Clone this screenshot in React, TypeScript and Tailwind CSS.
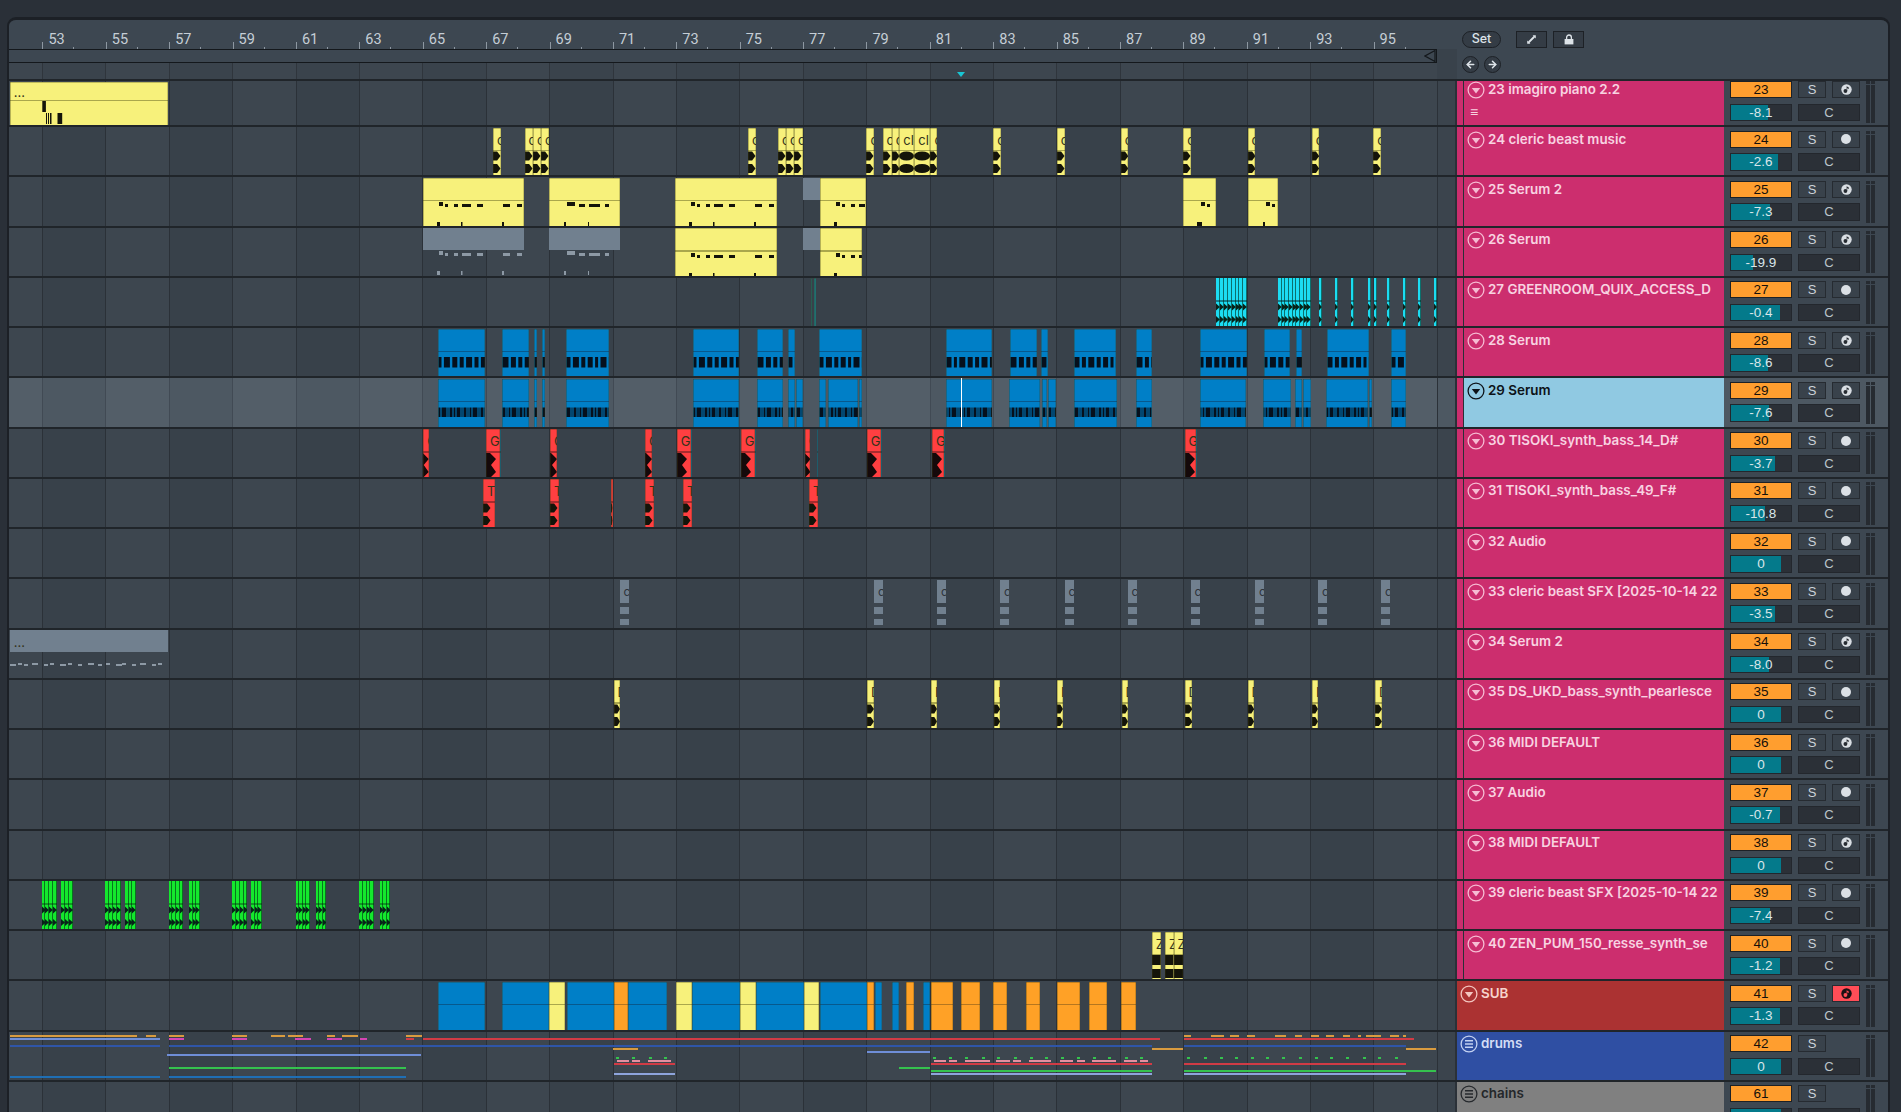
import { ArrowLeft, ArrowRight } from "lucide-react";

type ColorKey = "yellow" | "blue" | "red" | "cyan" | "grey" | "green" | "orange" | "teal";
type Kind = "wave" | "wide" | "red" | "tiny" | "bars" | "dense" | "ghost" | "zed" | "none";
type Note = [number, number, number, number?];

type Clip = {
  a: number;
  b: number;
  c: ColorKey;
  t?: string;
  kind?: Kind;
  notes?: Note[];
  muted?: boolean;
  head?: number;
};

const HEAD: Record<ColorKey, string> = {
  yellow: "bg-[#f7f17b]",
  blue: "bg-[#007fc7]",
  red: "bg-[#ff3f41]",
  cyan: "bg-[#1cdcf2]",
  grey: "bg-[#71808f]",
  green: "bg-[#14e82d]",
  orange: "bg-[#ffa126]",
  teal: "bg-[#17808f]",
};

const LINE: Record<ColorKey, string> = {
  yellow: "bg-[#aaa74c]",
  blue: "bg-[#07598d]",
  red: "bg-[#a82b2e]",
  cyan: "bg-[#11808f]",
  grey: "bg-[#5a6672]",
  green: "bg-[#0f9a22]",
  orange: "bg-[#b5761f]",
  teal: "bg-[#17808f]",
};

// long midi clip, notes relative to clip start
const PHRASE: Note[] = [
  [16, 4, 1, 4], [22, 3, 3], [31, 4, 3], [39, 9, 3], [54, 6, 3], [80, 7, 3], [94, 5, 3],
  [14, 3, 21, 4], [38, 1.5, 21, 4], [79, 2, 21, 4],
];
const PHRASE_B: Note[] = [
  [18, 8, 1, 4], [30, 6, 3], [40, 11, 3], [56, 4, 3], [15, 2, 21, 4], [39, 1, 21, 4],
];
const PHRASE_C: Note[] = [[16, 4, 1, 4], [22, 3, 3], [31, 4, 3], [39, 6, 3], [14, 3, 21, 4]];

const LONG_NOTES: Note[] = [
  0, 8, 14, 22, 34, 40, 50, 58, 68, 78, 88, 96, 106, 112, 122, 130, 142, 148,
].map((x, i) => [x, i % 3 === 0 ? 6 : 4, i % 2 ? 11 : 12, 2] as Note);

function split(a: number, b: number, n: number, c: ColorKey, kind: Kind, t?: string): Clip[] {
  const w = (b - a) / n;
  return Array.from({ length: n }, (_, i) => ({ a: a + i * w, b: a + (i + 1) * w, c, kind, t }));
}

const y24 = (a: number, b: number, t = "c", kind: Kind = "wave"): Clip => ({ a, b, c: "yellow", t, kind });
const blue = (a: number, b: number, kind: Kind): Clip => ({ a, b, c: "blue", kind });
const redClip = (a: number, b: number): Clip => ({ a, b, c: "red", t: "G", kind: "red" });
const tClip = (a: number, b: number): Clip => ({ a, b, c: "red", t: "T", kind: "wave" });
const violet = (x: number): Clip => ({ a: x, b: x + 1.4, c: "blue", kind: "none" });
const ghost = (a: number): Clip => ({ a, b: a + 9, c: "grey", t: "c", kind: "ghost", muted: true });
const yd = (a: number, b: number): Clip => ({ a, b, c: "yellow", t: "D", kind: "wave" });
const ySub = (a: number, b: number, c: ColorKey): Clip => ({ a, b, c, kind: "none" });

const GREENS: [number, number, number][] = [
  [41.6, 57, 4], [61.2, 73.5, 3], [104.5, 120.8, 4], [125, 136, 3], [168.6, 183.3, 4], [189, 199.6, 3],
  [232.2, 247.3, 4], [251.4, 262, 3], [295.5, 309.8, 4], [315.5, 326, 3], [359.2, 374, 4], [379.6, 390.2, 3],
];

const ROW28: [number, number][] = [
  [438.3, 485], [502, 528.7], [534, 537], [542, 544.7], [566, 609], [692.7, 739.3], [756.7, 783.3], [787.7, 795.3],
  [819, 862.3], [945.7, 992], [1010, 1037], [1041, 1047.5], [1073.6, 1116], [1136, 1151.8], [1200, 1247],
  [1264, 1290], [1295.7, 1302], [1326.8, 1369], [1391, 1406.4],
];

const ROW29: [number, number][] = [
  [438.3, 485], [502, 528.7], [534, 537], [542, 544.7], [566, 609], [692.7, 739.3], [756.7, 783.3], [787.7, 795.3],
  [796, 803], [819, 825.5], [827.5, 858], [858.5, 862.3], [945.7, 992], [1009, 1040], [1041.5, 1046.5], [1047.5, 1056],
  [1074, 1116.6], [1136, 1152], [1200, 1246], [1263, 1291], [1295, 1302], [1303, 1311], [1326, 1368], [1369, 1372],
  [1391, 1406],
];

const SUB: [number, number, ColorKey][] = [
  [438.4, 485.3, "blue"], [502, 549.4, "blue"], [549.4, 565.3, "yellow"], [566.5, 613.5, "blue"], [613.6, 628.2, "orange"],
  [628.2, 667, "blue"], [676.4, 692, "yellow"], [692, 740.2, "blue"], [740.2, 755.9, "yellow"], [755.9, 804, "blue"],
  [804, 818.6, "yellow"], [819.7, 866.7, "blue"], [866.7, 874, "orange"], [875, 882.4, "blue"], [891.8, 899.2, "blue"],
  [906, 913.8, "orange"], [922.7, 930.5, "blue"], [930.5, 953, "orange"], [961.4, 980.2, "orange"], [992.8, 1007.4, "orange"],
  [1025.7, 1039.9, "orange"], [1056.6, 1079.6, "orange"], [1088.5, 1106.8, "orange"], [1121, 1135.6, "orange"],
];

const CLIPS: Record<number, Clip[]> = {
  23: [
    {
      a: 9.7, b: 168, c: "yellow", t: "...", head: 18,
      notes: [[32.3, 3.6, 0, 11], [36, 1, 12, 11], [38, 1, 12, 11], [40, 1.5, 12, 11], [47.5, 4.7, 12, 11]],
    },
  ],
  24: [
    y24(493, 501), y24(524.5, 533), y24(533, 541), y24(541, 549), y24(748, 755.5), y24(778, 786), y24(786, 794), y24(794, 803),
    y24(866.4, 874), y24(882.5, 891.8), y24(891.8, 899.3), y24(899.3, 914.3, "cl", "wide"), y24(914.3, 930.4, "cl", "wide"),
    y24(930.4, 937.5), y24(993.2, 1000.7), y24(1056.8, 1064.6), y24(1120.7, 1128), y24(1183.2, 1191), y24(1247.5, 1255),
    y24(1311.8, 1319), y24(1373.2, 1381.4),
  ],
  25: [
    { a: 423.3, b: 524.5, c: "yellow", notes: PHRASE }, { a: 549.4, b: 620, c: "yellow", notes: PHRASE_B },
    { a: 675, b: 777, c: "yellow", notes: PHRASE }, { a: 802.6, b: 819.6, c: "grey", muted: true, kind: "none" },
    { a: 819.6, b: 866, c: "yellow", notes: PHRASE_C }, { a: 1183, b: 1215.7, c: "yellow", notes: [[18, 4, 1, 4], [24, 3, 3], [14, 5, 21, 4]] },
    { a: 1247.5, b: 1278, c: "yellow", notes: [[18, 4, 1, 4], [24, 3, 3], [15, 2, 21, 4]] },
  ],
  26: [
    { a: 423.3, b: 524.5, c: "grey", muted: true, notes: PHRASE }, { a: 549.4, b: 620, c: "grey", muted: true, notes: PHRASE_B },
    { a: 675, b: 777, c: "yellow", notes: PHRASE }, { a: 802.6, b: 819.6, c: "grey", muted: true, kind: "none" },
    { a: 819.6, b: 862, c: "yellow", notes: PHRASE_C },
  ],
  27: [
    { a: 810.7, b: 812.3, c: "teal", kind: "none" }, { a: 814.3, b: 815.7, c: "teal", kind: "none" },
    ...split(1216.4, 1247, 8, "cyan", "tiny"), ...split(1278, 1311, 9, "cyan", "tiny"),
    ...[1319.3, 1335, 1351, 1368, 1374, 1386.8, 1403, 1418, 1434].map((x) => ({ a: x, b: x + 2.8, c: "cyan" as ColorKey, kind: "tiny" as Kind })),
  ],
  28: ROW28.map(([a, b]) => blue(a, b, "bars")),
  29: ROW29.map(([a, b]) => blue(a, b, "dense")),
  30: [
    redClip(423.3, 429), redClip(486, 500), violet(500), redClip(550, 557), redClip(645, 652), redClip(676.7, 691), violet(691),
    redClip(740.7, 755), violet(755), redClip(804.7, 810.3), violet(816.7), redClip(866.7, 880.7), violet(880.7), redClip(932, 944),
    violet(944), redClip(1184.5, 1195.5), violet(1195.5),
  ],
  31: [tClip(483, 494.7), tClip(550, 558.7), tClip(611.3, 612.7), tClip(645, 653.7), tClip(683, 692), tClip(809, 818)],
  33: [619.5, 874, 937, 1000, 1064.5, 1127.5, 1190.6, 1255, 1318, 1381].map(ghost),
  34: [{ a: 9.7, b: 168, c: "grey", t: "...", muted: true, notes: LONG_NOTES }],
  35: [
    yd(613.5, 619.5), yd(867, 874), yd(931, 937), yd(994, 1000.2), yd(1057, 1063), yd(1121.5, 1127.5), yd(1184.5, 1192),
    yd(1247.5, 1253.6), yd(1312, 1318), yd(1375, 1382),
  ],
  39: GREENS.flatMap(([a, b, n]) => split(a, b, n, "green", "tiny")),
  40: [
    { a: 1151.8, b: 1160.6, c: "yellow", t: "Z", kind: "zed" }, { a: 1165, b: 1173.5, c: "yellow", t: "Z", kind: "zed" },
    { a: 1173.5, b: 1183, c: "yellow", t: "Z", kind: "zed" },
  ],
  41: SUB.map(([a, b, c]) => ySub(a, b, c)),
};

// automation-ish thin lines of the drums row: start, end, y, colour
const z = (v: number) => v / 1.912 + 600;
const OR = "#d99b3f";
const PERI = "#6f8ed8";
const PINK = "#d445b4";
const RED = "#d13b45";
const DBLUE = "#2f55a8";
const GRN = "#35c24e";
const LINES: [number, number, number, string][] = [
  [9.8, 137, 1035, OR], [146, 156, 1035, OR], [168.6, 184, 1035, OR], [232, 247, 1035, OR], [271, 285, 1035, OR],
  [288, 303, 1035, OR], [327, 335, 1035, OR], [342, 358, 1035, OR], [406, 422, 1035, OR],
  ...[[1116, 1130], [1168, 1193], [1205, 1222], [1237, 1252], [1290, 1312], [1328, 1343], [1360, 1375], [1388, 1404], [1420, 1434], [1450, 1455], [1465, 1493], [1510, 1527], [1535, 1541]].map(
    ([a, b]) => [z(a), z(b), 1035, OR] as [number, number, number, string],
  ),
  [9.8, 160, 1038.5, PERI], [168.6, 184, 1038.5, PINK], [232, 247, 1038.5, PINK], [295, 311, 1038.5, PINK], [327, 342, 1038.5, PINK],
  [360, 367, 1038.5, PINK], [406, 414, 1038.5, RED], [423, 1159.6, 1038.5, RED], [1183.7, 1413.8, 1038.5, RED],
  [9.8, 160, 1045, DBLUE], [168.6, 1151.8, 1045, DBLUE], [1183.7, 1406, 1045, DBLUE],
  [613, 637.7, 1048.3, OR], [1151.8, 1183, 1048.3, OR], [1406, 1436, 1048.3, OR],
  [167, 421, 1054.7, PERI], [866.7, 930, 1051.3, PERI],
  ...[34, 64, 96, 125, 640, 670, 701, 733, 762, 795, 825, 853, 884, 915, 945, 975, 1007, 1036, 1126, 1157, 1188, 1217, 1248, 1277, 1307, 1339, 1370, 1399, 1430, 1461, 1490, 1522].map(
    (v) => [z(v) - 1.5, z(v) + 1.5, 1057.5, GRN] as [number, number, number, string],
  ),
  ...[[33, 55], [61, 76], [92, 136], [638, 662], [667, 683], [697, 746], [758, 783], [789, 804], [820, 863], [880, 905], [912, 927], [941, 987], [1002, 1027], [1032, 1047]].map(
    ([a, b]) => [z(a), z(b), 1060.5, "#e48fa0"] as [number, number, number, string],
  ),
  [613.6, 675.3, 1063.7, RED], [930.5, 1151.8, 1063.7, RED], [1183.7, 1406, 1063.7, RED],
  [168.6, 406, 1067, GRN], [898.6, 930, 1067, GRN], [930.5, 1151.8, 1070, GRN], [1183.7, 1436, 1070, GRN],
  [613.6, 675.3, 1073.5, "#8ea4dc"], [930.5, 1151.8, 1073.5, "#8ea4dc"], [1183.7, 1406, 1073.5, "#8ea4dc"],
  [9.8, 160, 1076, "#1f6fb5"], [168.6, 406, 1076, "#1f6fb5"],
];

type Track = { n: string; num: number; vol: string; fill: number; midi?: boolean; tone?: "sub" | "drums" | "chains" };

const TRACKS: Track[] = [
  { n: "23 imagiro piano 2.2", num: 23, vol: "-8.1", fill: 62, midi: true },
  { n: "24 cleric beast music", num: 24, vol: "-2.6", fill: 79 },
  { n: "25 Serum 2", num: 25, vol: "-7.3", fill: 65, midi: true },
  { n: "26 Serum", num: 26, vol: "-19.9", fill: 37, midi: true },
  { n: "27 GREENROOM_QUIX_ACCESS_D", num: 27, vol: "-0.4", fill: 82 },
  { n: "28 Serum", num: 28, vol: "-8.6", fill: 61, midi: true },
  { n: "29 Serum", num: 29, vol: "-7.6", fill: 64, midi: true },
  { n: "30 TISOKI_synth_bass_14_D#", num: 30, vol: "-3.7", fill: 74 },
  { n: "31 TISOKI_synth_bass_49_F#", num: 31, vol: "-10.8", fill: 57 },
  { n: "32 Audio", num: 32, vol: "0", fill: 83 },
  { n: "33 cleric beast SFX [2025-10-14 22", num: 33, vol: "-3.5", fill: 74 },
  { n: "34 Serum 2", num: 34, vol: "-8.0", fill: 63, midi: true },
  { n: "35 DS_UKD_bass_synth_pearlesce", num: 35, vol: "0", fill: 83 },
  { n: "36 MIDI DEFAULT", num: 36, vol: "0", fill: 83, midi: true },
  { n: "37 Audio", num: 37, vol: "-0.7", fill: 82 },
  { n: "38 MIDI DEFAULT", num: 38, vol: "0", fill: 83, midi: true },
  { n: "39 cleric beast SFX [2025-10-14 22", num: 39, vol: "-7.4", fill: 65 },
  { n: "40 ZEN_PUM_150_resse_synth_se", num: 40, vol: "-1.2", fill: 81 },
  { n: "SUB", num: 41, vol: "-1.3", fill: 81, midi: true, tone: "sub" },
  { n: "drums", num: 42, vol: "0", fill: 83, tone: "drums" },
  { n: "chains", num: 61, vol: "0", fill: 83, tone: "chains" },
];

const BARS = Array.from({ length: 22 }, (_, i) => 53 + i * 2);

function ClipBody({ clip, w }: { clip: Clip; w: number }) {
  const kind = clip.kind;
  const noteFill = clip.muted ? "#8d99a5" : "#14140a";
  const shapes: React.ReactNode[] = [];

  if (kind === "wave") {
    const t = Math.min(w, 7.5);
    [5, 17.5].forEach((y) =>
      shapes.push(<polygon key={y} points={`0,${y - 4.5} ${t * 0.55},${y - 4.5} ${t},${y} ${t * 0.55},${y + 4.5} 0,${y + 4.5}`} fill="#14140a" />),
    );
  }
  if (kind === "wide") {
    [5, 17.5].forEach((y) => shapes.push(<ellipse key={y} cx={w / 2} cy={y} rx={w / 2} ry={4.5} fill="#14140a" />));
  }
  if (kind === "tiny") {
    [5, 17.5].forEach((y) => shapes.push(<polygon key={y} points={`0,${y - 3.5} ${w},${y} 0,${y + 3.5}`} fill="#082219" />));
  }
  if (kind === "red") {
    const e = Math.min(w - 3, 7);
    shapes.push(<polygon key="r" points={`0,0 ${e - 3},0 ${e + 3},6 ${e - 2},12 ${e + 3},19 ${e - 3},25 0,25`} fill="#15090a" />);
  }
  if (kind === "zed") {
    shapes.push(<rect key="a" x={0} y={0} width={w} height={10} fill="#14140a" />);
    shapes.push(<rect key="b" x={0} y={14} width={w} height={9} fill="#14140a" />);
  }
  if (kind === "bars" || kind === "dense") {
    const cycle = kind === "bars" ? [5, 4, 6, 4, 5, 3, 6] : [3, 1, 2, 5, 1, 3, 2, 4, 1];
    const gap = kind === "bars" ? 2.4 : 1;
    let x = 0.5;
    let i = Math.round(w);
    while (x < w) {
      const bw = cycle[i % cycle.length];
      shapes.push(<rect key={x} x={x} y={kind === "bars" ? 5 : 5.5} width={bw} height={kind === "bars" ? 10.5 : 9.5} fill="#05101d" />);
      x += bw + gap;
      i += 1;
    }
  }
  clip.notes?.forEach(([x, nw, y, h]) => shapes.push(<rect key={`${x}-${y}`} x={x} y={y} width={nw} height={h ?? 3} fill={noteFill} />));

  return (
    <svg width={w} height={26} className="block">
      {shapes}
    </svg>
  );
}

function ClipBox({ clip }: { clip: Clip }) {
  const w = clip.b - clip.a;
  const head = clip.head ?? 22;

  if (clip.kind === "ghost") {
    return (
      <div className="absolute top-[1px] bottom-0 flex flex-col overflow-hidden" style={{ left: clip.a - 9, width: w }}>
        <div className={`${HEAD.grey} h-[23px] shrink-0 pl-1 text-[12px] leading-[24px] text-[#2d333a] font-['Inter',sans-serif]`}>{clip.t}</div>
        <div className="bg-[#71808f] h-[7px] mt-[4px] shrink-0" />
        <div className="bg-[#71808f] h-[6px] mt-[5px] shrink-0" />
      </div>
    );
  }

  const edge =
    clip.kind === "tiny"
      ? "shadow-[inset_-1px_0_0_rgba(0,40,20,0.6)]"
      : clip.muted
        ? ""
        : "shadow-[inset_1px_0_0_rgba(60,60,20,0.35),inset_-1px_0_0_rgba(60,60,20,0.25),inset_0_1px_0_rgba(60,60,20,0.3)]";

  return (
    <div className="absolute top-[0.5px] bottom-0 overflow-hidden" style={{ left: clip.a - 9, width: w }}>
      <div className="flex flex-col h-full">
        <div
          className={`${HEAD[clip.c]} shrink-0 pl-[4px] text-[13px] whitespace-nowrap overflow-hidden text-[#33331a] font-['Inter',sans-serif]`}
          style={{ height: head, lineHeight: `${head + 2}px` }}
        >
          {clip.t}
        </div>
        {!clip.muted && <div className={`${LINE[clip.c]} h-[1.5px] shrink-0`} />}
        <div className={`${clip.muted ? "" : HEAD[clip.c]} flex-1 overflow-hidden`}>
          {clip.kind !== "none" && <ClipBody clip={clip} w={w} />}
        </div>
      </div>
      <div className={`absolute inset-0 ${edge}`} />
    </div>
  );
}

function NoteDisc({ armed }: { armed?: boolean }) {
  return (
    <svg width="11" height="11" viewBox="0 0 11 11">
      <circle cx="5.5" cy="5.5" r="5.2" fill={armed ? "#1a1114" : "#d9dee3"} />
      <circle cx="4.4" cy="7" r="1.9" fill={armed ? "#ff4d57" : "#262b31"} />
      <path d="M5.6 7V2.2l2.2 1.4V5L6.2 4.2V7z" fill={armed ? "#ff4d57" : "#262b31"} />
    </svg>
  );
}

function FoldIcon({ track, selected }: { track: Track; selected: boolean }) {
  const isGroupList = track.tone === "drums" || track.tone === "chains";
  const ink = selected ? "#0c1218" : track.tone === "chains" ? "#26292d" : track.tone === "drums" ? "#c4d2f2" : track.tone === "sub" ? "#f3c6c0" : "#f6bcd3";
  return (
    <svg width="18" height="18" viewBox="0 0 18 18" className="shrink-0">
      <circle cx="9" cy="9" r="7.9" fill="none" stroke={ink} strokeWidth="1.3" />
      {isGroupList ? (
        <path d="M5 5.8h8M5 9h8M5 12.2h8" stroke={ink} strokeWidth="1.4" />
      ) : (
        <polygon points="4.8,7 13.2,7 9,12.6" fill={ink} />
      )}
    </svg>
  );
}

function TrackRow({ track, first }: { track: Track; first?: boolean }) {
  const selected = track.num === 29;
  const plain = !track.tone;
  const clips = CLIPS[track.num] ?? [];
  const nameBg = selected
    ? "bg-[#90c9e2] text-[#0c1218]"
    : track.tone === "sub"
      ? "bg-[#ab3232] text-[#f6d3cd]"
      : track.tone === "drums"
        ? "bg-[#2f4fa3] text-[#d3ddf5]"
        : track.tone === "chains"
          ? "bg-[#808080] text-[#24272a]"
          : "bg-[#cc2e6e] text-[#f8d3e1]";

  return (
    <div className={`flex border-b-2 border-[#20252a] shrink-0 ${first ? "h-[46px]" : "h-[50.26px]"}`}>
      <div
        className={`relative w-[1428px] shrink-0 ${
          selected
            ? "bg-[repeating-linear-gradient(90deg,#414a54_33px,#414a54_34px,#4d5862_34px,#4d5862_96.4px,#414a54_96.4px,#414a54_97.4px,#535e68_97.4px,#535e68_159.8px)]"
            : "bg-[repeating-linear-gradient(90deg,#2b3138_33px,#2b3138_34px,#38414a_34px,#38414a_96.4px,#2b3138_96.4px,#2b3138_97.4px,#3d464f_97.4px,#3d464f_159.8px)]"
        }`}
      >
        {clips.map((c, i) => (
          <ClipBox key={i} clip={c} />
        ))}
        {track.num === 42 &&
          LINES.map(([a, b, y, color], i) => (
            <div key={i} className="absolute h-[2px]" style={{ left: a - 9, width: b - a, top: y - 1032, backgroundColor: color }} />
          ))}
        {selected && <div className="absolute top-0 bottom-0 left-[952px] w-px bg-white" />}
      </div>
      <div className={`w-[20px] shrink-0 border-l border-r-2 border-[#2b3138] ${selected ? "bg-[#4d5862]" : "bg-[#3b444d]"}`} />

      <div className={`w-[267px] shrink-0 flex ${nameBg}`}>
        {plain && (
          <div className="w-[7px] shrink-0 flex">
            <div className="w-[6px] bg-[#cc2e6e]" />
            <div className="w-[1px] bg-[#2a2f36]" />
          </div>
        )}
        <div className={`flex-1 min-w-0 relative flex gap-[3px] pl-[3px] ${first ? "pt-0" : "pt-[3.5px]"}`}>
          <FoldIcon track={track} selected={selected} />
          <span className="font-['Inter',sans-serif] text-[13.4px] font-semibold leading-[17px] whitespace-nowrap overflow-hidden pr-1">{track.n}</span>
          {first && <span className="absolute left-[6px] top-[23px] text-[14px] font-semibold leading-[16px] font-['Inter',sans-serif]">≡</span>}
        </div>
      </div>

      <div className={`flex-1 flex pl-[6px] ${selected ? "bg-[#4d5862]" : "bg-[#3d4751]"} ${first ? "pt-0" : "pt-[3.5px]"} font-['Liberation_Sans',sans-serif]`}>
        <div className="w-[130px] shrink-0 flex flex-col gap-[5.5px]">
          <div className="flex gap-[6px] h-[17px]">
            <div className="w-[62px] bg-[#ff9e2f] border border-[#1d2126] text-center text-[13.5px] leading-[15px] text-[#14100a]">{track.num}</div>
            <div className="w-[28px] border border-[#262b31] bg-[#39424b] text-center text-[13px] leading-[15px] text-[#cdd4da]">S</div>
            {!track.tone || track.tone === "sub" ? (
              <div className={`w-[28px] border border-[#262b31] flex items-center justify-center ${track.tone === "sub" ? "bg-[#ff4d57]" : "bg-[#39424b]"}`}>
                {track.midi ? <NoteDisc armed={track.tone === "sub"} /> : <div className="w-[10px] h-[10px] rounded-full bg-[#dbe0e5]" />}
              </div>
            ) : null}
          </div>
          <div className="flex gap-[6px] h-[17.5px]">
            <div className="relative w-[62px] bg-[#2b3037] border border-[#23272d] overflow-hidden">
              <div className="absolute inset-y-0 left-0 bg-[#047a8b]" style={{ width: `${track.fill}%` }} />
              <div className="relative text-center text-[13.5px] leading-[15.5px] text-[#d9e6ea]">{track.vol}</div>
            </div>
            <div className="w-[62px] bg-[#2b3037] border border-[#23272d] text-center text-[13px] leading-[15.5px] text-[#bcc5cb]">C</div>
          </div>
        </div>
        <div className="ml-[5.5px] w-[9.5px] flex justify-between">
          {[0, 1].map((m) => (
            <div key={m} className="w-[4px] flex flex-col gap-[1px] pb-[2.5px]">
              <div className="h-[3px] bg-[#262b31]" />
              <div className="flex-1 bg-[#262b31]" />
            </div>
          ))}
        </div>
      </div>
    </div>
  );
}

function Header() {
  return (
    <div className="flex h-[61px] shrink-0 border-b-2 border-[#20252a] bg-[#3d4751]">
      <div className="w-[1428px] shrink-0 flex flex-col">
        <div className="h-[28.5px] flex items-end pl-[33.4px] font-['Roboto',sans-serif]">
          {BARS.map((b) => (
            <div key={b} className="w-[63.4px] shrink-0 relative h-[18px]">
              <div className="absolute left-0 bottom-0 w-px h-[7px] bg-[#8d97a1]" />
              <div className="absolute left-[31px] bottom-0 w-px h-[2px] bg-[#8d97a1]" />
              <span className="absolute left-[6px] bottom-[0.5px] text-[14.5px] leading-[17px] text-[#c5ced6]">{b}</span>
            </div>
          ))}
        </div>
        <div className="relative h-[14px] shrink-0 border-y border-[#14181c] border-r">
          <svg width="12" height="14" viewBox="0 0 12 14" className="absolute right-0 -top-[1px]">
            <polygon points="11,1.5 1,7 11,12.5" fill="none" stroke="#14181c" strokeWidth="1.2" />
          </svg>
        </div>
        <div className="relative flex-1 bg-[repeating-linear-gradient(90deg,#2f353c_33px,#2f353c_34px,#3a434c_34px,#3a434c_96.4px,#2f353c_96.4px,#2f353c_97.4px,#3d464f_97.4px,#3d464f_159.8px)]">
          <svg width="8" height="5" viewBox="0 0 8 5" className="absolute left-[948px] top-[9px]">
            <polygon points="0,0 8,0 4,5" fill="#19c6d4" />
          </svg>
        </div>
      </div>
      <div className="w-[20px] shrink-0 flex flex-col">
        <div className="h-[28.5px]" />
        <div className="flex-1 bg-[#39424b] border-r-2 border-[#39424b]" />
      </div>
      <div className="flex-1 flex flex-col pl-[5px] pt-[11px] gap-[8px] font-['Inter',sans-serif]">
        <div className="flex items-center h-[17px]">
          <div className="w-[39px] h-[17px] rounded-full border-[1.5px] border-[#1d2126] bg-[#343c45] text-center text-[12.5px] leading-[14px] font-medium text-[#dde3e8]">Set</div>
          <div className="ml-[15px] w-[31px] h-[17px] border border-[#1d2126] bg-[#343c45] flex items-center justify-center">
            <svg width="11" height="11" viewBox="0 0 11 11">
              <path d="M3 8 8 3" stroke="#dde3e8" strokeWidth="1.8" strokeLinecap="round" />
              <path d="M1.2 6.6v3.2h3.2zM9.8 4.4V1.2H6.6z" fill="#dde3e8" />
            </svg>
          </div>
          <div className="ml-[6px] w-[31px] h-[17px] border border-[#1d2126] bg-[#343c45] flex items-center justify-center">
            <svg width="10" height="11" viewBox="0 0 10 11">
              <path d="M2.6 5V3.4a2.4 2.4 0 0 1 4.8 0V5" fill="none" stroke="#dde3e8" strokeWidth="1.3" />
              <rect x="0.6" y="5" width="8.8" height="5.4" fill="#dde3e8" />
            </svg>
          </div>
        </div>
        <div className="flex gap-[5px]">
          <div className="w-[17px] h-[17px] rounded-full border border-[#1d2126] bg-[#343c45] flex items-center justify-center">
            <ArrowLeft size={11} strokeWidth={3.5} color="#dde3e8" />
          </div>
          <div className="w-[17px] h-[17px] rounded-full border border-[#1d2126] bg-[#343c45] flex items-center justify-center">
            <ArrowRight size={11} strokeWidth={3.5} color="#dde3e8" />
          </div>
        </div>
      </div>
    </div>
  );
}

export default function App() {
  return (
    <div className="h-[1112px] w-full overflow-hidden bg-[#2a3038] pl-[7px] pr-[11px] pt-[17px]">
      <div className="h-[1100px] flex flex-col border-x-2 border-t-[3px] border-[#1c2026] rounded-t-[9px] overflow-hidden">
        <Header />
        {TRACKS.map((t, i) => (
          <TrackRow key={t.num} track={t} first={i === 0} />
        ))}
      </div>
    </div>
  );
}
